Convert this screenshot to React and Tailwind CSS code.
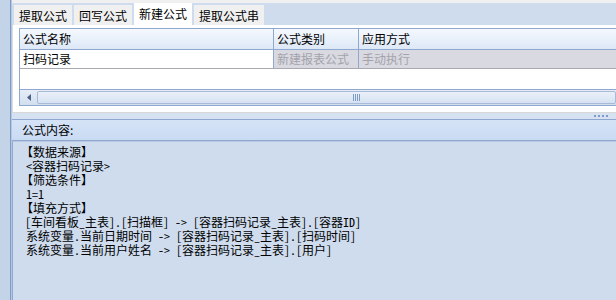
export default function App() {
  const font = { fontFamily: '"Noto Sans CJK SC", "Liberation Sans", sans-serif' };
  const mono = { fontFamily: '"Noto Sans Mono CJK SC", "Noto Sans CJK SC", monospace' };
  return (
    <div className="w-[616px] h-[300px] overflow-hidden flex bg-[#cfdcee] text-[12px] leading-none text-black" style={font}>
      {/* left edge */}
      <div className="w-[12px] h-full flex shrink-0">
        <div className="w-[10px] h-full bg-[#c3d3e8]"></div>
        <div className="w-[1px] h-full bg-[#7f9cc6]"></div>
        <div className="w-[1px] h-full bg-[#b4c8e2]"></div>
      </div>
      <div className="flex-1 flex flex-col min-w-0">
        <div className="h-[3px] bg-[#f0f0f0] shrink-0"></div>
        {/* tabs */}
        <div className="h-[22px] flex items-end pl-[2px] gap-[2px] bg-[#cfdcee] shrink-0">
          <div className="h-[20px] px-[5px] bg-[#f0f0f0] flex items-center pt-[2px]">提取公式</div>
          <div className="h-[20px] px-[5px] bg-[#f0f0f0] flex items-center pt-[2px]">回写公式</div>
          <div className="h-[22px] px-[5px] bg-white flex items-center">新建公式</div>
          <div className="h-[20px] px-[5px] bg-[#f0f0f0] flex items-center pt-[2px]">提取公式串</div>
        </div>
        {/* grid panel */}
        <div className="h-[87px] bg-white pl-[6px] pt-[3px] shrink-0 border-l border-[#dcdcdc] flex flex-col">
          <div className="h-[22px] flex bg-gradient-to-b from-[#f5f9fe] to-[#dde8f7] border-t border-b border-[#8fa8cf] border-l border-l-[#8fa8cf]">
            <div className="w-[254px] border-r border-[#8fa8cf] flex items-center pl-[3px]">公式名称</div>
            <div className="w-[85px] border-r border-[#8fa8cf] flex items-center pl-[3px]">公式类别</div>
            <div className="flex-1 flex items-center pl-[3px]">应用方式</div>
          </div>
          <div className="h-[19px] flex border-b border-[#a9a9b4] border-l border-l-[#8fa8cf]">
            <div className="w-[254px] flex items-center pl-[3px] bg-white border-r border-[#8fa8cf]">扫码记录</div>
            <div className="w-[85px] flex items-center pl-[3px] bg-[#d9d9e1] text-[#a3a3ab] border-r border-[#8fa8cf]">新建报表公式</div>
            <div className="flex-1 flex items-center pl-[3px] bg-[#d9d9e1] text-[#a3a3ab]">手动执行</div>
          </div>
          <div className="flex-1 border-l border-[#8fa8cf]"></div>
          <div className="h-[17px] flex border-t border-b border-[#8fa8cf] bg-gradient-to-b from-[#e6edf7] to-[#d3dfef] border-l border-l-[#8fa8cf]">
            <div className="w-[17px] flex items-center justify-center">
              <svg width="4" height="7" viewBox="0 0 4 7"><path d="M4 0 L0 3.5 L4 7 Z" fill="#4d6185" /></svg>
            </div>
            <div className="flex-1 my-[1px] rounded-[2px] border border-[#a7bbd8] bg-gradient-to-b from-[#eaf0f9] to-[#d6e2f2] flex items-center justify-center pl-[60px]">
              <div className="flex gap-[1px]">
                <div className="w-[1px] h-[7px] bg-[#7f9cc6]"></div>
                <div className="w-[1px] h-[7px] bg-[#7f9cc6]"></div>
                <div className="w-[1px] h-[7px] bg-[#7f9cc6]"></div>
                <div className="w-[1px] h-[7px] bg-[#7f9cc6]"></div>
              </div>
            </div>
          </div>
          <div className="h-[6px]"></div>
        </div>
        {/* splitter */}
        <div className="h-[8px] bg-[#d6e2f2] border-t border-[#d8d8d8] border-b border-b-[#8fa8cf] flex items-center justify-end pr-[8px] gap-[2px] shrink-0">
          <div className="w-[2px] h-[2px] bg-[#7f9cc6]"></div>
          <div className="w-[2px] h-[2px] bg-[#7f9cc6]"></div>
          <div className="w-[2px] h-[2px] bg-[#7f9cc6]"></div>
          <div className="w-[2px] h-[2px] bg-[#7f9cc6]"></div>
        </div>
        {/* header */}
        <div className="h-[21px] bg-gradient-to-b from-[#d5e3f6] to-[#c9dbf3] flex items-center pl-[10px] border-b border-[#8fa8cf] shrink-0">公式内容:</div>
        <div className="flex-1 bg-[#cfdcee] border-t border-[#b7c8e0] border-l border-l-[#8fa8cf] pl-[8px] pt-[3px] leading-[14px]" style={mono}>
          <div>【数据来源】</div>
          <div className="pl-[5px]">&lt;容器扫码记录&gt;</div>
          <div>【筛选条件】</div>
          <div className="pl-[5px]">1=1</div>
          <div>【填充方式】</div>
          <div className="pl-[4px] whitespace-pre">[车间看板_主表].[扫描框] -&gt; [容器扫码记录_主表].[容器ID]</div>
          <div className="pl-[5px] whitespace-pre">系统变量.当前日期时间 -&gt; [容器扫码记录_主表].[扫码时间]</div>
          <div className="pl-[5px] whitespace-pre">系统变量.当前用户姓名 -&gt; [容器扫码记录_主表].[用户]</div>
        </div>
      </div>
    </div>
  );
}
